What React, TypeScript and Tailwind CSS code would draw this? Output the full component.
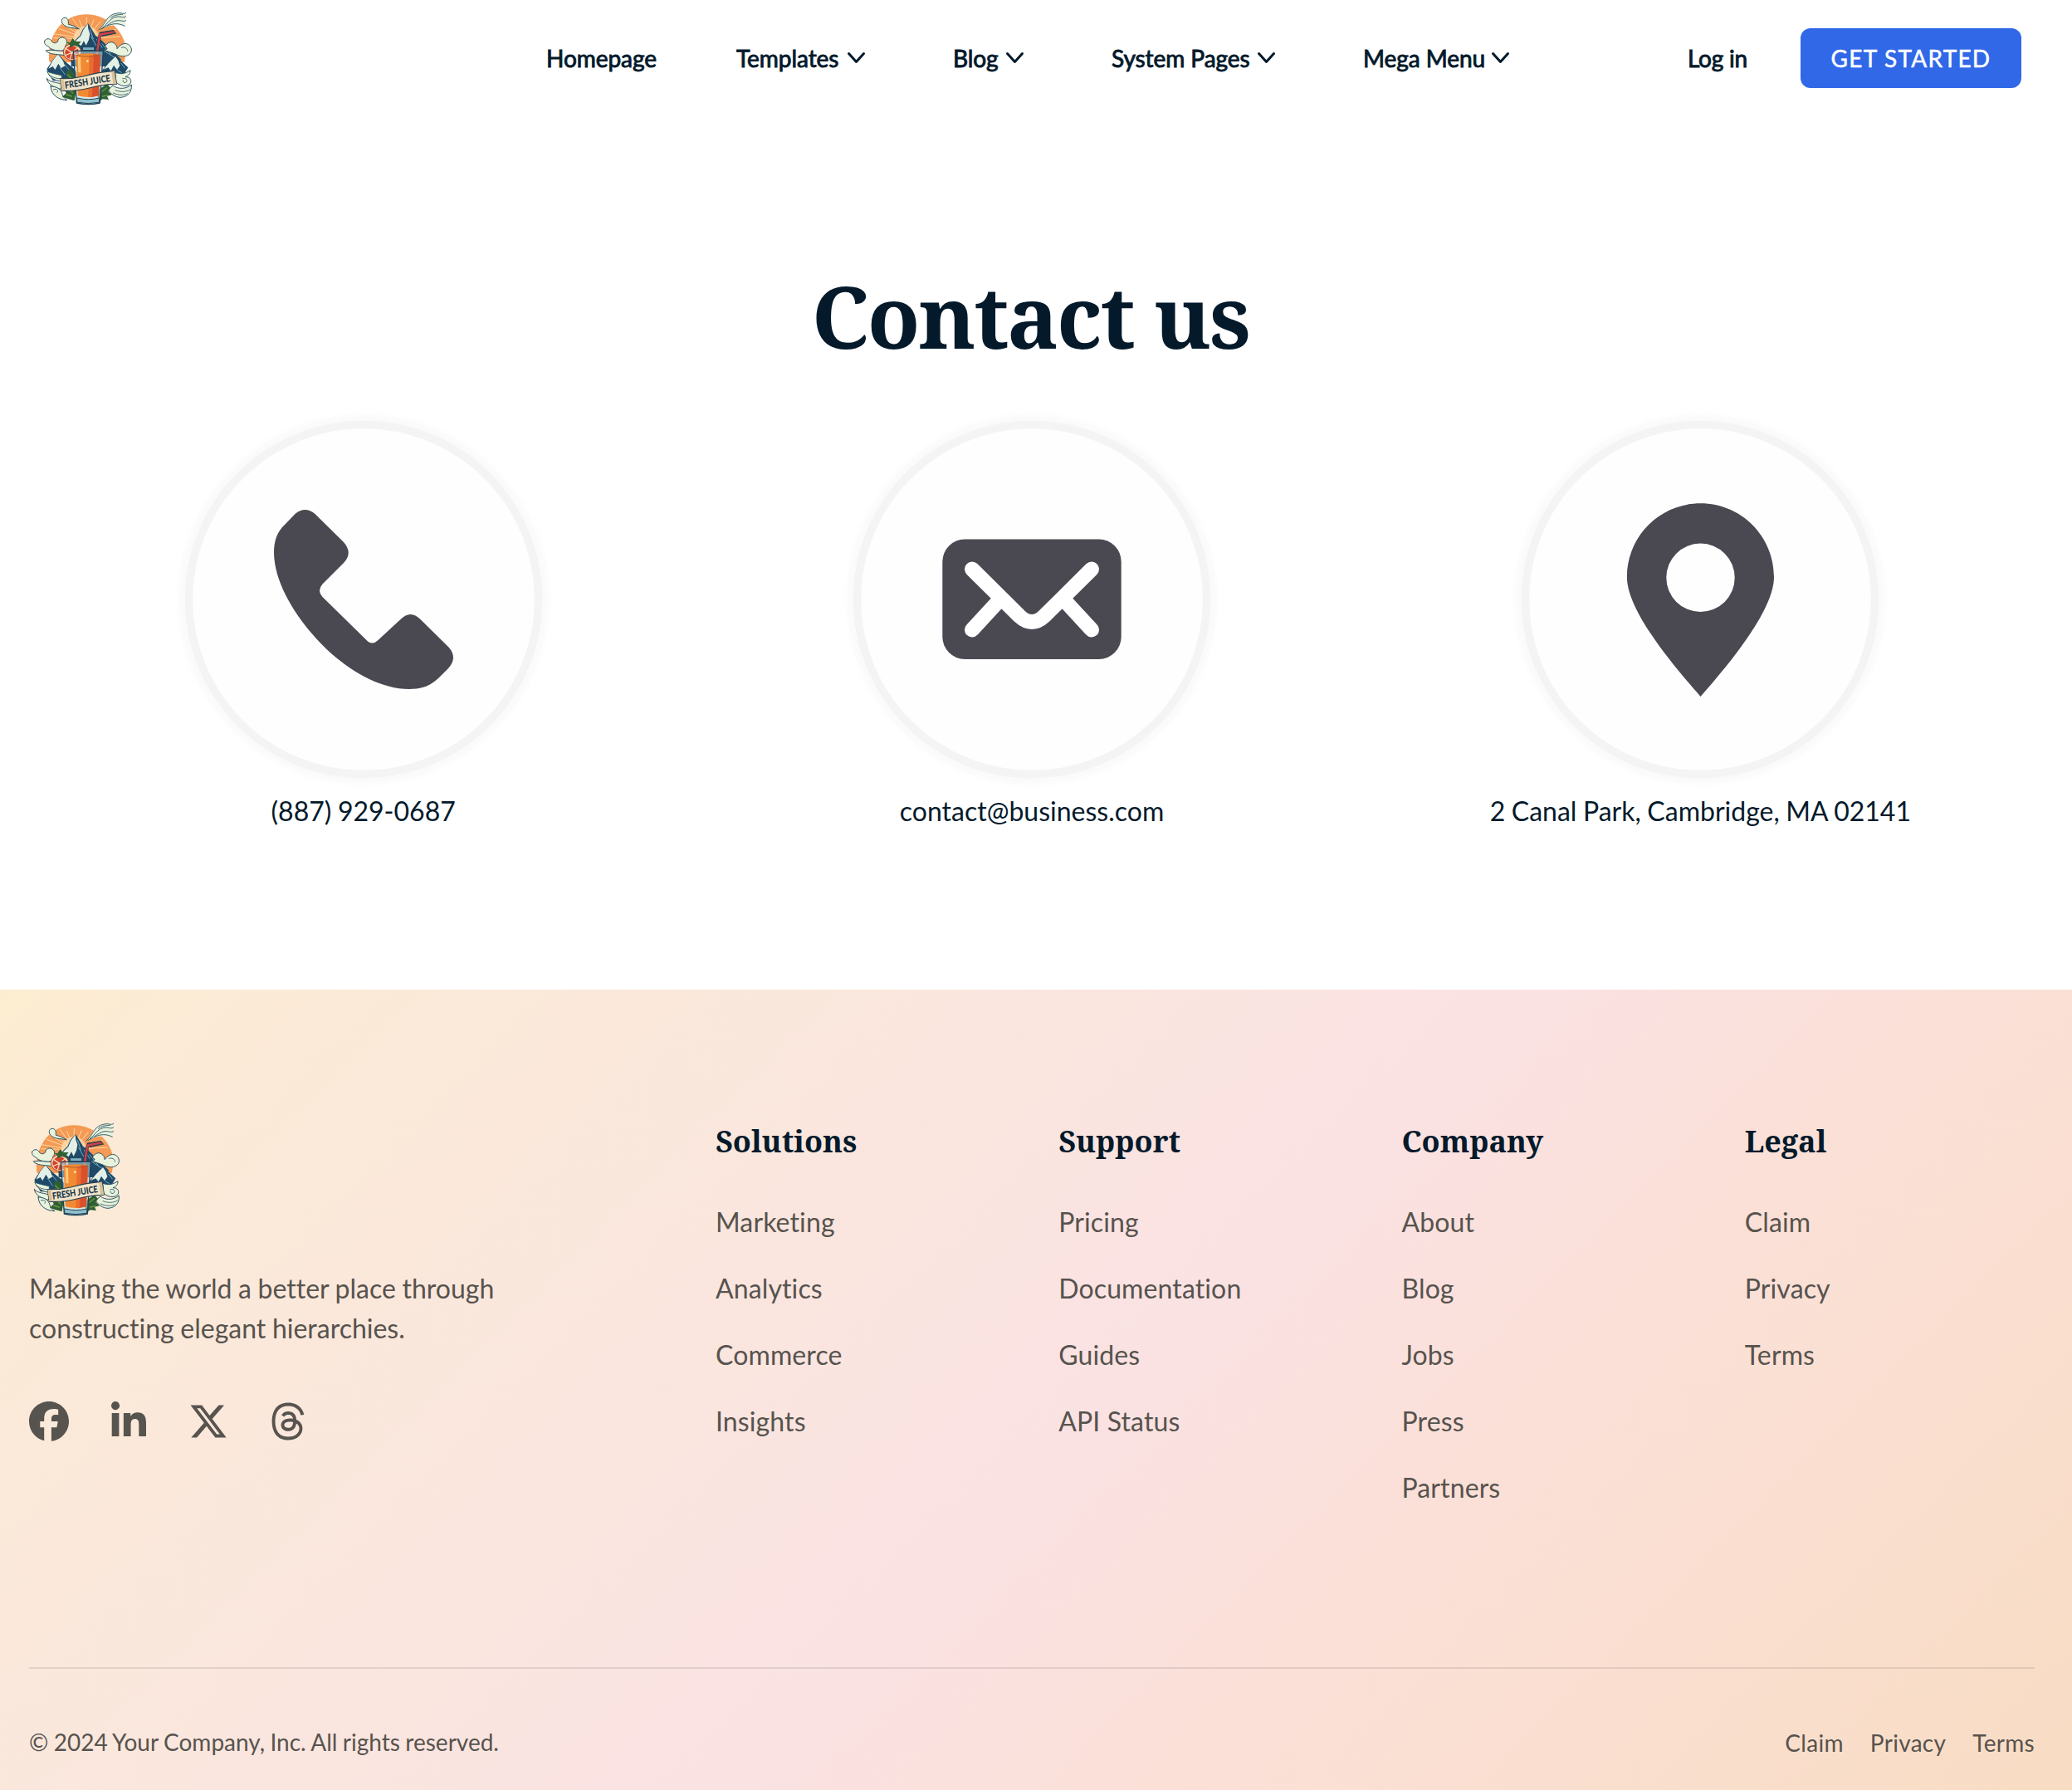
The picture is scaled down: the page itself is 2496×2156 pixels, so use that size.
import React from "react";
import { FaFacebook, FaLinkedinIn, FaXTwitter, FaThreads } from "react-icons/fa6";

function Logo() {
  return (
    <svg viewBox="0 0 480 420" className="h-[140px] w-[160px] shrink-0" strokeLinejoin="round" strokeLinecap="round">
      <path d="M90 215C84 120 145 52 225 52C305 52 370 120 368 190L362 225H92Z" fill="#f49a54" />
      <g stroke="#fbd9a6" strokeWidth="3">
        <path d="M225 140L128 104M225 140L140 88M225 140L152 80M225 140L176 68M225 140L200 74M225 140L226 64M225 140L252 72M225 140L276 78M225 140L330 106M225 140L346 132M225 140L108 122M225 140L108 137" />
      </g>
      <circle cx="225" cy="140" r="46" fill="#fbdcae" opacity=".8" />
      <path d="M168 168L188 142L202 128L212 106L231 84L246 108L258 128L276 142L306 170L352 216L300 240H170Z" fill="#1f4a69" />
      <path d="M230 86L214 108L205 130L190 144L174 166L196 158L206 166L216 148L224 164L234 144L238 122L232 104Z" fill="#e3f0e6" />
      <path d="M238 106L250 140M242 132L260 164M262 142L282 172M282 158L312 196M290 184L330 210" stroke="#78aab8" strokeWidth="3" fill="none" />
      <path d="M82 250L104 216L122 194L148 222L178 246L190 262V292H104Z" fill="#1f4a69" />
      <path d="M122 196L104 218L88 248L104 240L112 252L124 230L134 246L148 238L140 218Z" fill="#e3f0e6" />
      <path d="M146 232L170 262M130 244L148 270" stroke="#78aab8" strokeWidth="3" />
      <path d="M282 254L304 226L330 202L350 220L376 244L364 264L320 282H282Z" fill="#1f4a69" />
      <path d="M330 204L306 228L286 252L304 244L314 256L324 236L336 252L346 238L340 218Z" fill="#e3f0e6" />
      <path d="M350 228L364 246M338 254L352 262" stroke="#78aab8" strokeWidth="3" />
      <g fill="#e9f2dc" stroke="#2c5566" strokeWidth="3">
        <path d="M198 104C176 100 152 102 142 88C132 80 134 64 148 64C162 66 160 80 160 88C172 90 184 96 198 104Z" />
        <path d="M74 148C80 136 96 138 100 150C108 158 116 156 122 150C122 136 138 130 150 140C158 148 156 160 148 166C154 174 146 182 134 184C112 184 92 176 88 168C78 164 72 158 74 148Z" />
        <path d="M80 182C104 178 124 186 146 184V200C124 196 100 198 84 188Z" />
        <path d="M292 168C300 152 318 146 330 160C336 166 336 172 336 176C346 164 360 152 376 160C392 170 392 190 378 198C366 206 346 204 332 196C320 190 300 186 288 180C300 180 306 176 292 168Z" />
        <path d="M84 258C96 264 116 268 136 272V294C112 292 92 282 84 258Z" />
        <path d="M82 284C98 300 120 296 134 304V322C110 318 86 306 82 284Z" />
        <path d="M96 312C118 312 134 322 138 340C142 354 150 358 156 362C128 362 98 346 96 312Z" />
        <path d="M330 262C350 270 366 266 384 254C384 266 378 274 366 278C384 278 390 290 384 302C372 316 346 312 334 298Z" />
        <path d="M322 310C340 322 366 324 388 306C390 332 376 350 348 352C330 352 310 338 304 324Z" />
      </g>
      <g stroke="#2c5566" strokeWidth="2.500" fill="none">
        <path d="M356 284C366 280 376 288 370 296C364 302 354 296 358 290M330 326C350 334 370 332 382 324M322 336C344 346 364 344 374 338M106 324C116 318 126 326 120 334M90 270C104 282 120 284 132 284M352 172C362 168 374 174 374 184" />
      </g>
      <path d="M270 108C292 86 296 54 334 48C352 42 362 56 368 46C370 60 362 62 368 72C360 78 370 84 366 94C352 92 342 88 324 92C304 92 290 100 270 108Z" fill="#e9f2dc" />
      <path d="M270 108C298 84 296 54 336 48C352 44 360 54 368 46M282 102C306 82 312 62 340 60C352 60 360 66 368 60M276 106C304 94 316 74 342 74C354 74 360 80 368 74M300 94C322 84 340 82 364 94M314 64C324 54 344 52 356 52" stroke="#2c5566" strokeWidth="2.800" fill="none" />
      <path d="M152 262L164 250L176 258L186 280V340L182 364L160 358L138 350L152 336L146 322L158 312L150 292L156 280Z" fill="#2f5f33" />
      <path d="M158 270L172 284M152 342L172 348M160 322L176 336" stroke="#6d9a45" strokeWidth="4" />
      <path d="M274 320L300 304L312 318L304 330L318 342L300 348L306 360L284 358L272 366L262 340Z" fill="#2f5f33" />
      <path d="M282 330L298 318M284 348L304 344" stroke="#6d9a45" strokeWidth="4" />
      <path d="M258 196L268 130L274 118L324 110L330 118L278 130L268 196Z" fill="#cf4148" stroke="#1d3a50" strokeWidth="2" />
      <path d="M274 118L324 110M282 130L332 120" stroke="#1d3a50" strokeWidth="3.500" />
      <ellipse cx="174" cy="188" rx="32" ry="30" fill="#f8d6ab" stroke="#a63f31" strokeWidth="3" />
      <ellipse cx="173" cy="190" rx="25" ry="24" fill="#d3402f" />
      <path d="M173 190L152 176M173 190L192 174M173 190L196 200M173 190L166 213M173 190L149 200" stroke="#f8d6ab" strokeWidth="4" />
      <path d="M152 152L166 154L176 138L184 150L206 150L196 162L202 172L182 164L164 172L166 162Z" fill="#2f6135" />
      <path d="M178 184H286L274 372Q232 382 190 372Z" fill="#bcdcd8" fillOpacity=".55" stroke="#1f4257" strokeWidth="4" />
      <path d="M212 170H254V182H212Z" fill="#7fb2c4" stroke="#1f4257" strokeWidth="3" />
      <path d="M188 198Q232 188 276 198L270 346Q232 356 194 346Z" fill="#f28a33" />
      <path d="M250 196L276 198L270 346L240 352Z" fill="#d9502f" />
      <path d="M236 200L252 200L246 350H232Z" fill="#e86d2e" />
      <path d="M194 206H204L206 262H196Z" fill="#fbc878" />
      <path d="M188 199Q232 210 276 199" stroke="#a8552a" strokeWidth="2.500" fill="none" />
      <path d="M192 354Q232 364 273 354L271 370Q232 378 193 370Z" fill="#8fc0cb" stroke="#1f4257" strokeWidth="3" />
      <circle cx="229" cy="221" r="4" fill="#fde7c6" />
      <path d="M130 284Q172 286 214 276Q270 260 326 256L334 304Q286 304 236 318Q190 330 136 328Z" fill="#f1e4c8" stroke="#26404f" strokeWidth="3.500" />
      <path d="M130 284L142 286L148 326L136 328ZM326 256L316 259L322 304L334 304Z" fill="#d8bf98" />
      <g transform="translate(149 320) rotate(-9)">
        <text textLength="166" lengthAdjust="spacingAndGlyphs" fontFamily="Lato, sans-serif" fontWeight="900" fontSize="34" fill="#17364b">
          FRESH JUICE
        </text>
      </g>
    </svg>
  );
}

function Chevron() {
  return (
    <svg viewBox="0 0 24 16" className="h-4 w-6" fill="none" stroke="currentColor" strokeWidth="3" strokeLinecap="round" strokeLinejoin="round">
      <path d="M2.500 2.500L11.500 12.500L20.500 2.500" />
    </svg>
  );
}

const nav = [
  { label: "Homepage", menu: false, cls: "w-[133px]" },
  { label: "Templates", menu: true, cls: "w-[125px]" },
  { label: "Blog", menu: true, cls: "w-[55px]" },
  { label: "System Pages", menu: true, cls: "w-[167px]" },
  { label: "Mega Menu", menu: true, cls: "w-[146px]" },
];

const columns = [
  { title: "Solutions", links: ["Marketing", "Analytics", "Commerce", "Insights"] },
  { title: "Support", links: ["Pricing", "Documentation", "Guides", "API Status"] },
  { title: "Company", links: ["About", "Blog", "Jobs", "Press", "Partners"] },
  { title: "Legal", links: ["Claim", "Privacy", "Terms"] },
];

function Disc({ children }: { children: React.ReactNode }) {
  return (
    <svg viewBox="0 0 480 464" className="h-[464px] w-[480px]">
      <defs>
        <filter id="halo" x="-10%" y="-10%" width="120%" height="120%">
          <feGaussianBlur stdDeviation="3" />
        </filter>
      </defs>
      <circle cx="240" cy="232" r="216" fill="none" stroke="#fafafa" strokeWidth="13" filter="url(#halo)" />
      <circle cx="240" cy="232" r="210.500" fill="#fefefe" stroke="#f4f4f4" strokeWidth="9.500" />
      {children}
    </svg>
  );
}

function Phone() {
  return (
    <Disc>
      <path
        fill="#4a4952"
        transform="translate(1.500 0)"
        d="M156 129Q168 119 180 129L214.500 163Q226 176 214.500 188L189 213.500Q182 221.500 189 229L241 280Q248.500 288.500 256 281L283 256Q295 244 307 256L341 289.500Q352 302 341 314.500L328.500 327C318 337 307 340 293.500 340C262 340 228 322 200 297.500C166 267 131 218 130.500 176C130.500 160 135 150 143.500 142Z"
      />
    </Disc>
  );
}

function Mail() {
  return (
    <Disc>
      <rect x="132.300" y="159.500" width="215.400" height="144.500" rx="27" fill="#4a4952" />
      <path d="M168 195.500L225 252Q240 266 255 252L312 195.500M168 268.500L198 236M312 268.500L282 236" fill="none" stroke="#fff" strokeWidth="18" strokeLinecap="round" />
    </Disc>
  );
}

function Pin() {
  return (
    <Disc>
      <path
        fill="#4a4952"
        fillRule="evenodd"
        transform="translate(0.500 0)"
        d="M240 116.300C289 116.300 328.500 156 328.500 205C328.500 245 275 309 240 349C205 309 151.400 245 151.400 205C151.400 156 191 116.300 240 116.300ZM240 164.600A41.200 41.200 0 1 0 240 247A41.200 41.200 0 1 0 240 164.600Z"
      />
    </Disc>
  );
}

const contacts = [
  { icon: <Phone />, text: "(887) 929-0687" },
  { icon: <Mail />, text: "contact@business.com" },
  { icon: <Pin />, text: "2 Canal Park, Cambridge, MA 02141" },
];

export default function App() {
  return (
    <div className="flex h-[2156px] w-[2496px] flex-col overflow-hidden bg-white font-[Lato,sans-serif] text-[#041a2b] [font-variant-ligatures:none]">
      <header className="flex h-[140px] shrink-0 items-center pr-[61px] pl-[29px]">
        <Logo />
        <nav className="ml-[469px] flex items-center text-[28px] tracking-[-0.050px] [-webkit-text-stroke:0.9px_currentColor]">
          {nav.map((n) => (
            <a key={n.label} className={n.menu ? "mr-[104px] flex items-center whitespace-nowrap last:mr-0" : "mr-24 flex items-center whitespace-nowrap"}>
              <span className={n.cls}>{n.label}</span>
              {n.menu && (
                <span className="ml-2 [-webkit-text-stroke:0]">
                  <Chevron />
                </span>
              )}
            </a>
          ))}
        </nav>
        <a className="ml-auto text-[28px] tracking-[-0.200px] whitespace-nowrap [-webkit-text-stroke:0.9px_currentColor]">Log in</a>
        <button className="ml-16 h-[72px] w-[266px] rounded-xl bg-[#3068e8] text-[28px] tracking-[1.250px] text-white [-webkit-text-stroke:0.5px_currentColor]">
          GET STARTED
        </button>
      </header>

      <main className="flex h-[1052px] w-[2486px] shrink-0 flex-col items-center">
        <h1 className="mt-44 pr-1 font-['Noto_Serif','Liberation_Serif',serif] text-[104px] leading-[128px] font-bold tracking-[-2.400px]">Contact us</h1>
        <div className="mt-[46px] grid w-[2416px] grid-cols-3">
          {contacts.map((c) => (
            <div key={c.text} className="flex flex-col items-center">
              {c.icon}
              <p className="-mt-px text-[32px] leading-[48px] [word-spacing:-0.600px]">{c.text}</p>
            </div>
          ))}
        </div>
      </main>

      <footer className="flex flex-1 flex-col bg-[linear-gradient(135deg,#fdedd0_0%,#fcebd5_6%,#fbe9d9_16%,#fae6de_35%,#fae2e3_53%,#fbe0d9_66%,#fadfd1_80%,#f8dcc3_100%)] pr-[45px] pl-[35px] text-[#57534e]">
        <div className="flex h-[818px] border-b-2 border-[#57534e]/15 pt-[146px]">
          <div className="w-[827px] shrink-0">
            <div className="-ml-[21px]">
              <Logo />
            </div>
            <p className="mt-[50px] w-[600px] text-[32px] leading-[48px] [word-spacing:-0.600px]">
              Making the world a better place through constructing elegant hierarchies.
            </p>
            <div className="mt-16 flex gap-12 text-[48px]">
              <FaFacebook />
              <FaLinkedinIn />
              <FaXTwitter />
              <FaThreads />
            </div>
          </div>
          {columns.map((c) => (
            <div key={c.title} className="w-[413.250px] shrink-0">
              <h3 className="mt-[13px] font-['Noto_Serif','Liberation_Serif',serif] text-[36px] leading-[48px] font-bold text-[#041a2b]">{c.title}</h3>
              <ul className="mt-[49px] flex flex-col gap-8 text-[32px] leading-[48px] tracking-[0.120px]">
                {c.links.map((l) => (
                  <li key={l}>{l}</li>
                ))}
              </ul>
            </div>
          ))}
        </div>
        <div className="mt-16 flex justify-between text-[28px] leading-[48px]">
          <p className="[word-spacing:-0.700px]">© 2024 Your Company, Inc. All rights reserved.</p>
          <div className="mt-px flex gap-8 tracking-[0.300px]">
            <a>Claim</a>
            <a>Privacy</a>
            <a>Terms</a>
          </div>
        </div>
      </footer>
    </div>
  );
}
